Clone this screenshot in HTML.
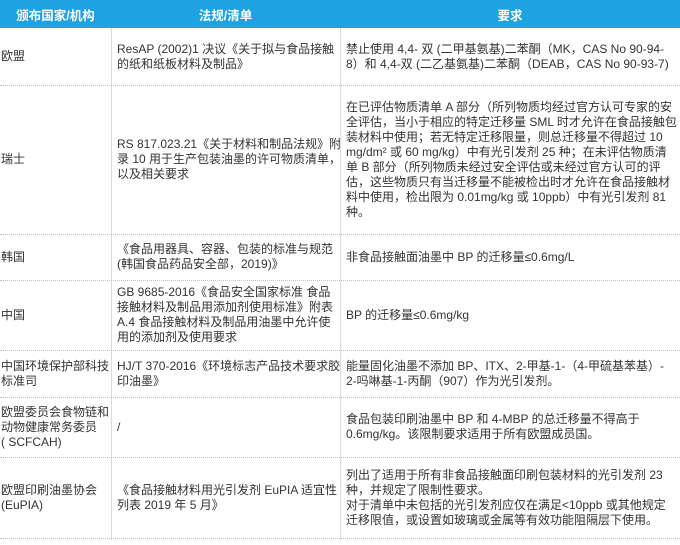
<!DOCTYPE html>
<html><head><meta charset="utf-8"><style>
html,body{margin:0;padding:0;background:#fff;}
body{width:680px;height:545px;position:relative;overflow:hidden;font-family:"Liberation Sans","Noto Sans CJK SC",sans-serif;font-size:12px;color:#333;}
.h{position:absolute;top:0;height:28px;background:#1ea2e2;color:#fff;font-weight:bold;font-size:12.5px;display:flex;align-items:center;justify-content:center;}
.c{position:absolute;display:flex;align-items:center;line-height:15px;white-space:nowrap;box-sizing:border-box;padding-left:6px;overflow:hidden;}
.hl{position:absolute;left:0;width:680px;height:0;border-top:1px dotted #b8c4cc;}
.vl{position:absolute;top:28px;height:512px;width:0;border-left:1px solid #d4dce2;}
.a{left:0;width:111px;padding-left:1px}
.b{left:111px;width:229px}
.d{left:340px;width:340px}
</style></head><body>
<div class="h" style="left:0;width:111px">颁布国家/机构</div>
<div class="h" style="left:111px;width:229px">法规/清单</div>
<div class="h" style="left:340px;width:340px">要求</div>
<div class="vl" style="left:111px"></div>
<div class="vl" style="left:340px"></div>
<div class="hl" style="top:85px"></div>
<div class="hl" style="top:234px"></div>
<div class="hl" style="top:280px"></div>
<div class="hl" style="top:350px"></div>
<div class="hl" style="top:397px"></div>
<div class="hl" style="top:457px"></div>
<div class="hl" style="top:538px"></div>

<div class="c a" style="top:28px;height:57px">欧盟</div>
<div class="c b" style="top:28px;height:57px">ResAP (2002)1 决议《关于拟与食品接触<br>的纸和纸板材料及制品》</div>
<div class="c d" style="top:28px;height:57px">禁止使用 4,4- 双 (二甲基氨基)二苯酮（MK，CAS No 90-94-<br>8）和 4,4-双 (二乙基氨基)二苯酮（DEAB，CAS No 90-93-7)</div>

<div class="c a" style="top:85px;height:149px">瑞士</div>
<div class="c b" style="top:85px;height:149px">RS 817.023.21《关于材料和制品法规》附<br>录 10 用于生产包装油墨的许可物质清单，<br>以及相关要求</div>
<div class="c d" style="top:85px;height:149px">在已评估物质清单 A 部分（所列物质均经过官方认可专家的安<br>全评估，当小于相应的特定迁移量 SML 时才允许在食品接触包<br>装材料中使用；若无特定迁移限量，则总迁移量不得超过 10<br>mg/dm² 或 60 mg/kg）中有光引发剂 25 种；在未评估物质清<br>单 B 部分（所列物质未经过安全评估或未经过官方认可的评<br>估，这些物质只有当迁移量不能被检出时才允许在食品接触材<br>料中使用，检出限为 0.01mg/kg 或 10ppb）中有光引发剂 81<br>种。</div>

<div class="c a" style="top:234px;height:46px">韩国</div>
<div class="c b" style="top:234px;height:46px">《食品用器具、容器、包装的标准与规范<br>(韩国食品药品安全部，2019)》</div>
<div class="c d" style="top:234px;height:46px">非食品接触面油墨中 BP 的迁移量≤0.6mg/L</div>

<div class="c a" style="top:280px;height:70px">中国</div>
<div class="c b" style="top:280px;height:70px">GB 9685-2016《食品安全国家标准 食品<br>接触材料及制品用添加剂使用标准》附表<br>A.4 食品接触材料及制品用油墨中允许使<br>用的添加剂及使用要求</div>
<div class="c d" style="top:280px;height:70px">BP 的迁移量≤0.6mg/kg</div>

<div class="c a" style="top:350px;height:47px">中国环境保护部科技<br>标准司</div>
<div class="c b" style="top:350px;height:47px">HJ/T 370-2016《环境标志产品技术要求胶<br>印油墨》</div>
<div class="c d" style="top:350px;height:47px">能量固化油墨不添加 BP、ITX、2-甲基-1-（4-甲硫基苯基）-<br>2-吗啉基-1-丙酮（907）作为光引发剂。</div>

<div class="c a" style="top:397px;height:60px">欧盟委员会食物链和<br>动物健康常务委员<br>( SCFCAH)</div>
<div class="c b" style="top:397px;height:60px">/</div>
<div class="c d" style="top:397px;height:60px">食品包装印刷油墨中 BP 和 4-MBP 的总迁移量不得高于<br>0.6mg/kg。该限制要求适用于所有欧盟成员国。</div>

<div class="c a" style="top:457px;height:81px">欧盟印刷油墨协会<br>(EuPIA)</div>
<div class="c b" style="top:457px;height:81px">《食品接触材料用光引发剂 EuPIA 适宜性<br>列表 2019 年 5 月》</div>
<div class="c d" style="top:457px;height:81px">列出了适用于所有非食品接触面印刷包装材料的光引发剂 23<br>种，并规定了限制性要求。<br>对于清单中未包括的光引发剂应仅在满足&lt;10ppb 或其他规定<br>迁移限值，或设置如玻璃或金属等有效功能阻隔层下使用。</div>
</body></html>
